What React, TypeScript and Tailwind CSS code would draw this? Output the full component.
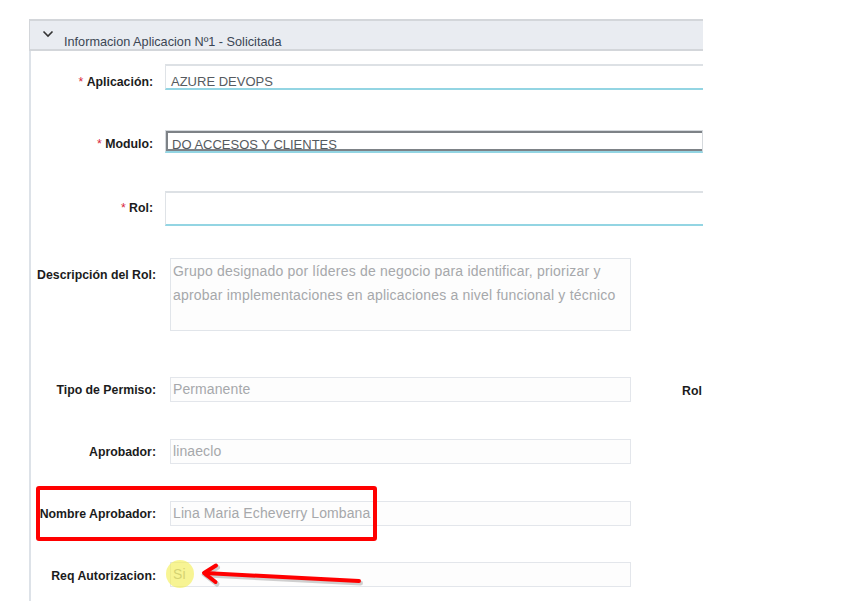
const labelCls =
  "w-[125px] shrink-0 text-right text-[12.3px] leading-[16px] font-bold text-[#1b1b1b]";

function Req() {
  return <span className="text-[#d7263d] font-normal">* </span>;
}

function TopInput({ value, h, pt }: { value?: string; h: string; pt: string }) {
  return (
    <div
      className={`ml-[9px] flex-1 border-l border-t-2 border-b-2 border-l-[#dfe3e7] border-t-[#dde1e5] border-b-[#93d5e3] bg-white pl-[5px] text-[13px] leading-[16px] text-[#555a60] ${h} ${pt}`}
    >
      {value}
    </div>
  );
}

function ReadInput({ value }: { value: string }) {
  return (
    <div className="ml-[14px] flex h-[25px] w-[461px] shrink-0 items-center border border-[#e3e6eb] bg-[#fdfdfd] pl-[2px] text-[14px] tracking-[0.1px] text-[#a6a8ab]">
      {value}
    </div>
  );
}

export default function App() {
  return (
    <div className="relative h-[601px] w-[863px] overflow-hidden bg-white font-['Liberation_Sans',Arial,sans-serif]">
      <div className="ml-[29px] w-[674px] pt-[19px]">
        <div className="flex h-[32px] items-start border-y-2 border-l border-[#d3d6da] bg-[#e9ecf1] pl-[12px]">
          <svg width="12" height="8" viewBox="0 0 12 8" className="mt-[9px]">
            <path d="M1.5 1.5 L6 6 L10.5 1.5" fill="none" stroke="#333" strokeWidth="1.6" />
          </svg>
          <span className="ml-[10px] mt-[14px] text-[12.7px] leading-[15px] text-[#3b4654]">
            Informacion Aplicacion Nº1 - Solicitada
          </span>
        </div>

        <div className="h-[550px] overflow-hidden border-l-2 border-[#dde2e8]">
          <div className="mt-[13px] flex items-start">
            <div className={`${labelCls} pt-[10px] pr-[3px]`}>
              <Req />Aplicación:
            </div>
            <TopInput value="AZURE DEVOPS" h="h-[26px]" pt="pt-[8px]" />
          </div>

          <div className="mt-[40px] flex items-start">
            <div className={`${labelCls} pt-[6px] pr-[3px]`}>
              <Req />Modulo:
            </div>
            <div className="ml-[9px] h-[23px] flex-1 overflow-hidden border border-[#d5d9dd] border-b-[#93d5e3] border-b-2">
              <div className="h-full overflow-hidden border-2 border-[#7d8287] border-r-0 pl-[4px] pt-[4px] text-[13px] leading-[16px] text-[#555a60]">
                DO ACCESOS Y CLIENTES
              </div>
            </div>
          </div>

          <div className="mt-[38px] flex items-start">
            <div className={`${labelCls} pt-[9px] pr-[3px]`}>
              <Req />Rol:
            </div>
            <TopInput h="h-[35px]" pt="pt-[8px]" />
          </div>

          <div className="mt-[32px] flex items-start">
            <div className={`${labelCls} pt-[9px]`}>Descripción del Rol:</div>
            <div className="ml-[14px] h-[73px] w-[461px] shrink-0 border border-[#e1e5ea] bg-[#fdfdfd] pl-[2px] text-[14px] leading-[24px] tracking-[0.2px] text-[#a6a8ab]">
              Grupo designado por líderes de negocio para identificar, priorizar y aprobar
              implementaciones en aplicaciones a nivel funcional y técnico
            </div>
          </div>

          <div className="mt-[46px] flex items-start">
            <div className={`${labelCls} pt-[5px]`}>Tipo de Permiso:</div>
            <ReadInput value="Permanente" />
            <div className="ml-[51px] shrink-0 pt-[6px] text-[12.3px] font-bold leading-[16px] text-[#1b1b1b]">
              Rol
            </div>
          </div>

          <div className="mt-[37px] flex items-start">
            <div className={`${labelCls} pt-[5px]`}>Aprobador:</div>
            <ReadInput value="linaeclo" />
          </div>

          <div className="mt-[37px] flex items-start">
            <div className={`${labelCls} pt-[5px]`}>Nombre Aprobador:</div>
            <ReadInput value="Lina Maria Echeverry Lombana" />
          </div>

          <div className="mt-[36px] flex items-start">
            <div className={`${labelCls} pt-[6px]`}>Req Autorizacion:</div>
            <ReadInput value="Si" />
          </div>
        </div>
      </div>

      {/* annotation overlays */}
      <div className="pointer-events-none absolute left-[36px] top-[486px] h-[55px] w-[341px] rounded-[3px] border-4 border-[#ff0000]" />
      <div className="pointer-events-none absolute left-[166px] top-[560px] h-[28px] w-[28px] rounded-full bg-[#f3ee4c] opacity-60" />
      <svg
        className="pointer-events-none absolute left-0 top-0"
        width="863"
        height="601"
        viewBox="0 0 863 601"
      >
        <g stroke="#000" strokeOpacity="0.18" strokeWidth="5" strokeLinecap="round" fill="none" transform="translate(1.5 2)">
          <path d="M359 581 L205 573" />
          <path d="M216 565.5 L204 573 L215.5 582" />
        </g>
        <g stroke="#ff0000" strokeWidth="4" strokeLinecap="round" strokeLinejoin="round" fill="none">
          <path d="M359 581 L205 573" />
          <path d="M216 565.5 L204 573 L215.5 582" />
        </g>
      </svg>
    </div>
  );
}
